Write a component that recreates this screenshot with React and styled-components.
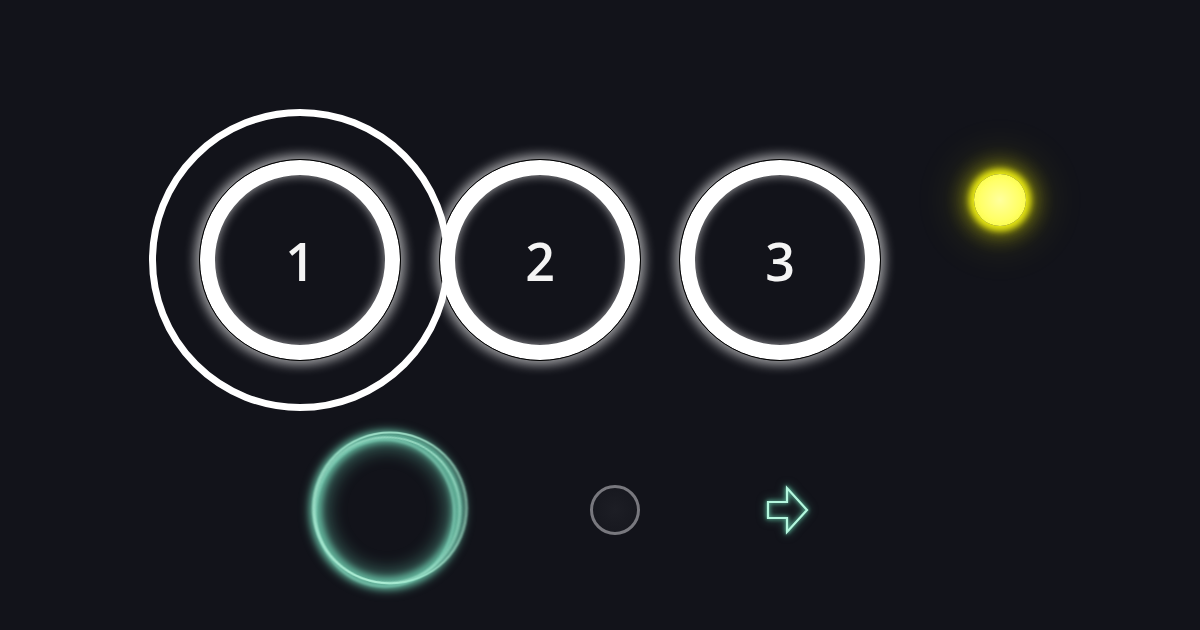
import React from "react";
import styled, { createGlobalStyle } from "styled-components";

const Global = createGlobalStyle`
  html, body { margin: 0; padding: 0; background: #12131a; }
  body { width: 1200px; height: 630px; overflow: hidden; font-family: "Open Sans", "Noto Sans", sans-serif; }
`;

const Stage = styled.div`
  width: 1200px;
  height: 630px;
  box-sizing: border-box;
  padding-top: 159px;
  background: #12131a;
  display: flex;
  flex-direction: column;
  gap: 67px;
`;

const TopRow = styled.div`
  display: flex;
  align-items: center;
  padding-left: 199px;
  gap: 38px;
`;

const Step = styled.div`
  position: relative;
  width: 202px;
  height: 202px;
  box-sizing: border-box;
  border-radius: 50%;
  border: 1px solid #000;
  background: #12131a;
  display: flex;
  align-items: center;
  justify-content: center;
  box-shadow:
    inset 0 0 0 15px #ffffff,
    inset 0 0 10px 16px rgba(255, 255, 255, 0.55),
    0 0 11px 4px rgba(255, 255, 255, 0.6);
  z-index: ${(p) => (p.$active ? 2 : 1)};

  ${(p) =>
    p.$active &&
    `
    &::before {
      content: "";
      position: absolute;
      left: -51px;
      top: -51px;
      width: 302px;
      height: 302px;
      box-sizing: border-box;
      border-radius: 50%;
      border: 7px solid #ffffff;
      pointer-events: none;
    }
  `}
`;

const Num = styled.span`
  font-family: "Open Sans", "Noto Sans", sans-serif;
  font-size: 52px;
  font-weight: 600;
  color: #f4f4f4;
  line-height: 1;
  margin-top: 2px;
`;

const Sun = styled.div`
  align-self: flex-start;
  margin-top: 15px;
  margin-left: 55px;
  width: 52px;
  height: 52px;
  border-radius: 50%;
  background: radial-gradient(circle at 50% 50%, #ffff9e 0%, #ffff66 55%, #f8f828 100%);
  box-shadow:
    0 0 6px 5px rgba(255, 255, 20, 0.85),
    0 0 18px 12px rgba(235, 235, 0, 0.4),
    0 0 40px 22px rgba(200, 200, 0, 0.12);
`;

const BottomRow = styled.div`
  display: flex;
  align-items: center;
  padding-left: 307px;
  height: 164px;
`;

const Halo = styled.div`
  position: relative;
  width: 160px;
  height: 164px;
  flex: none;
`;

const HaloRing = styled.div`
  position: absolute;
  inset: ${(p) => p.$inset}px;
  border-radius: 50%;
  border: ${(p) => p.$w}px solid ${(p) => p.$c};
  transform: ${(p) => p.$t};
  filter: blur(${(p) => p.$b}px);
  box-shadow: ${(p) => p.$s};
`;

const Dot = styled.div`
  margin-left: 123px;
  width: 50px;
  height: 50px;
  box-sizing: border-box;
  border-radius: 50%;
  border: 3px solid #78787e;
  background: radial-gradient(circle, #1d1e25 0%, #15161d 100%);
  flex: none;
`;

const Arrow = styled.svg`
  margin-left: 127px;
  width: 42px;
  height: 46px;
  overflow: visible;
  filter: drop-shadow(0 0 2px rgba(120, 240, 200, 0.9)) drop-shadow(0 0 4px rgba(100, 220, 180, 0.5));
  flex: none;
`;

export default function App() {
  return (
    <>
      <Global />
      <Stage>
        <TopRow>
          <Step $active>
            <Num>1</Num>
          </Step>
          <Step>
            <Num>2</Num>
          </Step>
          <Step>
            <Num>3</Num>
          </Step>
          <Sun />
        </TopRow>
        <BottomRow>
          <Halo>
            <HaloRing
              $inset={3}
              $w={12}
              $c="rgba(110, 205, 175, 0.85)"
              $t="none"
              $b={3}
              $s="0 0 6px 2px rgba(110, 210, 180, 0.5), inset 0 0 16px 6px rgba(110, 210, 180, 0.4)"
            />
            <HaloRing
              $inset={4}
              $w={2}
              $c="rgba(180, 245, 220, 0.75)"
              $t="translate(3px, -2px) scale(1.02, 0.98)"
              $b={0.8}
              $s="none"
            />
            <HaloRing
              $inset={9}
              $w={2}
              $c="rgba(150, 230, 205, 0.6)"
              $t="translate(-2px, 3px) scale(0.99, 1.02)"
              $b={1}
              $s="none"
            />
            <HaloRing
              $inset={6}
              $w={2}
              $c="rgba(190, 250, 225, 0.55)"
              $t="rotate(20deg) scale(1.0, 0.97)"
              $b={0.8}
              $s="none"
            />
          </Halo>
          <Dot />
          <Arrow viewBox="0 0 42 46">
            <polygon
              points="1,15 20,15 20,1 40,23 20,45 20,31 1,31"
              fill="none"
              stroke="#b4f7de"
              strokeWidth="2.2"
              strokeLinejoin="miter"
            />
          </Arrow>
        </BottomRow>
      </Stage>
    </>
  );
}
